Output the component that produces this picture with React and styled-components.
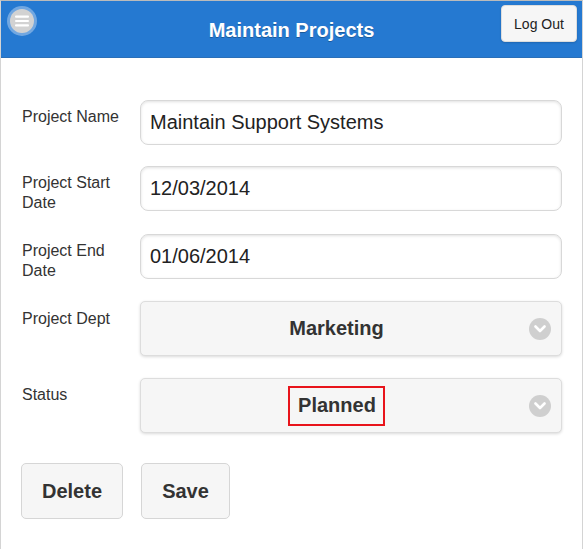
import React from "react";
import styled, { createGlobalStyle } from "styled-components";

const Global = createGlobalStyle`
  html, body { margin: 0; padding: 0; background: #fff; }
  body { font-family: Arial, "Liberation Sans", sans-serif; color: #333; }
`;

const Page = styled.div`
  width: 583px;
  height: 549px;
  box-sizing: border-box;
  border-left: 1px solid #d4d4d4;
  border-right: 1px solid #d4d4d4;
  border-top: 1px solid #bbb;
  background: #fff;
`;

const Header = styled.header`
  position: relative;
  height: 56px;
  background: #2579d1;
  border-bottom: 1px solid #2a6fb8;
  display: flex;
  align-items: center;
  justify-content: center;
`;

const Title = styled.h1`
  margin: 0;
  margin-top: 2px;
  font-size: 20px;
  font-weight: bold;
  color: #fff;
  text-shadow: 0 1px 0 #1b5a9a;
`;

const MenuButton = styled.button`
  position: absolute;
  left: 6px;
  top: 5px;
  width: 30px;
  height: 30px;
  border-radius: 50%;
  border: none;
  padding: 0;
  background: rgba(255,255,255,0.35);
  display: flex;
  align-items: center;
  justify-content: center;
`;

const MenuInner = styled.span`
  width: 24px;
  height: 24px;
  border-radius: 50%;
  background: #d2d2d2;
  display: flex;
  align-items: center;
  justify-content: center;
`;

const LogOut = styled.button`
  position: absolute;
  right: 5px;
  top: 4px;
  width: 76px;
  height: 37px;
  border: 1px solid #ddd;
  border-radius: 4px;
  background: #f6f6f6;
  font-family: Arial, "Liberation Sans", sans-serif;
  font-size: 14px;
  color: #222;
  box-shadow: 0 1px 2px rgba(0,0,0,0.15);
`;

const Form = styled.div`
  padding: 42px 20px 0 21px;
  display: flex;
  flex-direction: column;
`;

const Row = styled.div`
  display: grid;
  grid-template-columns: 118px 1fr;
  align-items: start;
  margin-bottom: ${p => p.$gap}px;
`;

const Label = styled.label`
  font-size: 16px;
  line-height: 20px;
  color: #333;
  padding-top: ${p => p.$top}px;
`;

const Input = styled.div`
  height: 45px;
  box-sizing: border-box;
  border: 1px solid #d8d8d8;
  border-radius: 8px;
  box-shadow: inset 0 1px 3px rgba(0,0,0,0.12);
  padding: 0 9px;
  display: flex;
  align-items: center;
  font-size: 20px;
  color: #222;
`;

const Select = styled.div`
  position: relative;
  height: 55px;
  box-sizing: border-box;
  border: 1px solid #ddd;
  border-radius: 5px;
  background: #f6f6f6;
  box-shadow: 0 1px 3px rgba(0,0,0,0.15);
  padding-right: 29px;
  display: flex;
  align-items: center;
  justify-content: center;
  font-size: 20px;
  font-weight: bold;
  color: #333;
`;

const Highlight = styled.span`
  border: 2px solid #e8141b;
  padding: 6px 7px 7px 8px;
`;

const Chevron = styled.span`
  position: absolute;
  right: 10px;
  top: 50%;
  margin-top: -11px;
  width: 22px;
  height: 22px;
  border-radius: 50%;
  background: #cfcfcf;
  display: flex;
  align-items: center;
  justify-content: center;
`;

const Actions = styled.div`
  display: flex;
  gap: 18px;
  margin-top: 8px;
  margin-left: -1px;
`;

const Button = styled.button`
  height: 56px;
  width: ${p => p.$w}px;
  box-sizing: border-box;
  border: 1px solid #d6d6d6;
  border-radius: 5px;
  background: #f6f6f6;
  font-family: Arial, "Liberation Sans", sans-serif;
  font-size: 20px;
  font-weight: bold;
  color: #333;
`;

const ChevronIcon = () => (
  <svg width="12" height="8" viewBox="0 0 12 8">
    <path d="M1.5 1.5 L6 6 L10.5 1.5" stroke="#fff" strokeWidth="2.6" fill="none" strokeLinecap="round" strokeLinejoin="round" />
  </svg>
);

const Bars = () => (
  <svg width="14" height="12" viewBox="0 0 14 12">
    <rect x="0" y="0.5" width="14" height="2.2" rx="1" fill="#fff" />
    <rect x="0" y="4.9" width="14" height="2.2" rx="1" fill="#fff" />
    <rect x="0" y="9.3" width="14" height="2.2" rx="1" fill="#fff" />
  </svg>
);

export default function App() {
  return (
    <>
      <Global />
      <Page>
        <Header>
          <MenuButton><MenuInner><Bars /></MenuInner></MenuButton>
          <Title>Maintain Projects</Title>
          <LogOut>Log Out</LogOut>
        </Header>
        <Form>
          <Row $gap={21}>
            <Label $top={7}>Project Name</Label>
            <Input>Maintain Support Systems</Input>
          </Row>
          <Row $gap={21}>
            <Label $top={7}>Project Start Date</Label>
            <Input>12/03/2014</Input>
          </Row>
          <Row $gap={20}>
            <Label $top={7}>Project End Date</Label>
            <Input>01/06/2014</Input>
          </Row>
          <Row $gap={22}>
            <Label $top={8}>Project Dept</Label>
            <Select>Marketing<Chevron><ChevronIcon /></Chevron></Select>
          </Row>
          <Row $gap={22}>
            <Label $top={7}>Status</Label>
            <Select><Highlight>Planned</Highlight><Chevron><ChevronIcon /></Chevron></Select>
          </Row>
          <Actions>
            <Button $w={102}>Delete</Button>
            <Button $w={89}>Save</Button>
          </Actions>
        </Form>
      </Page>
    </>
  );
}
